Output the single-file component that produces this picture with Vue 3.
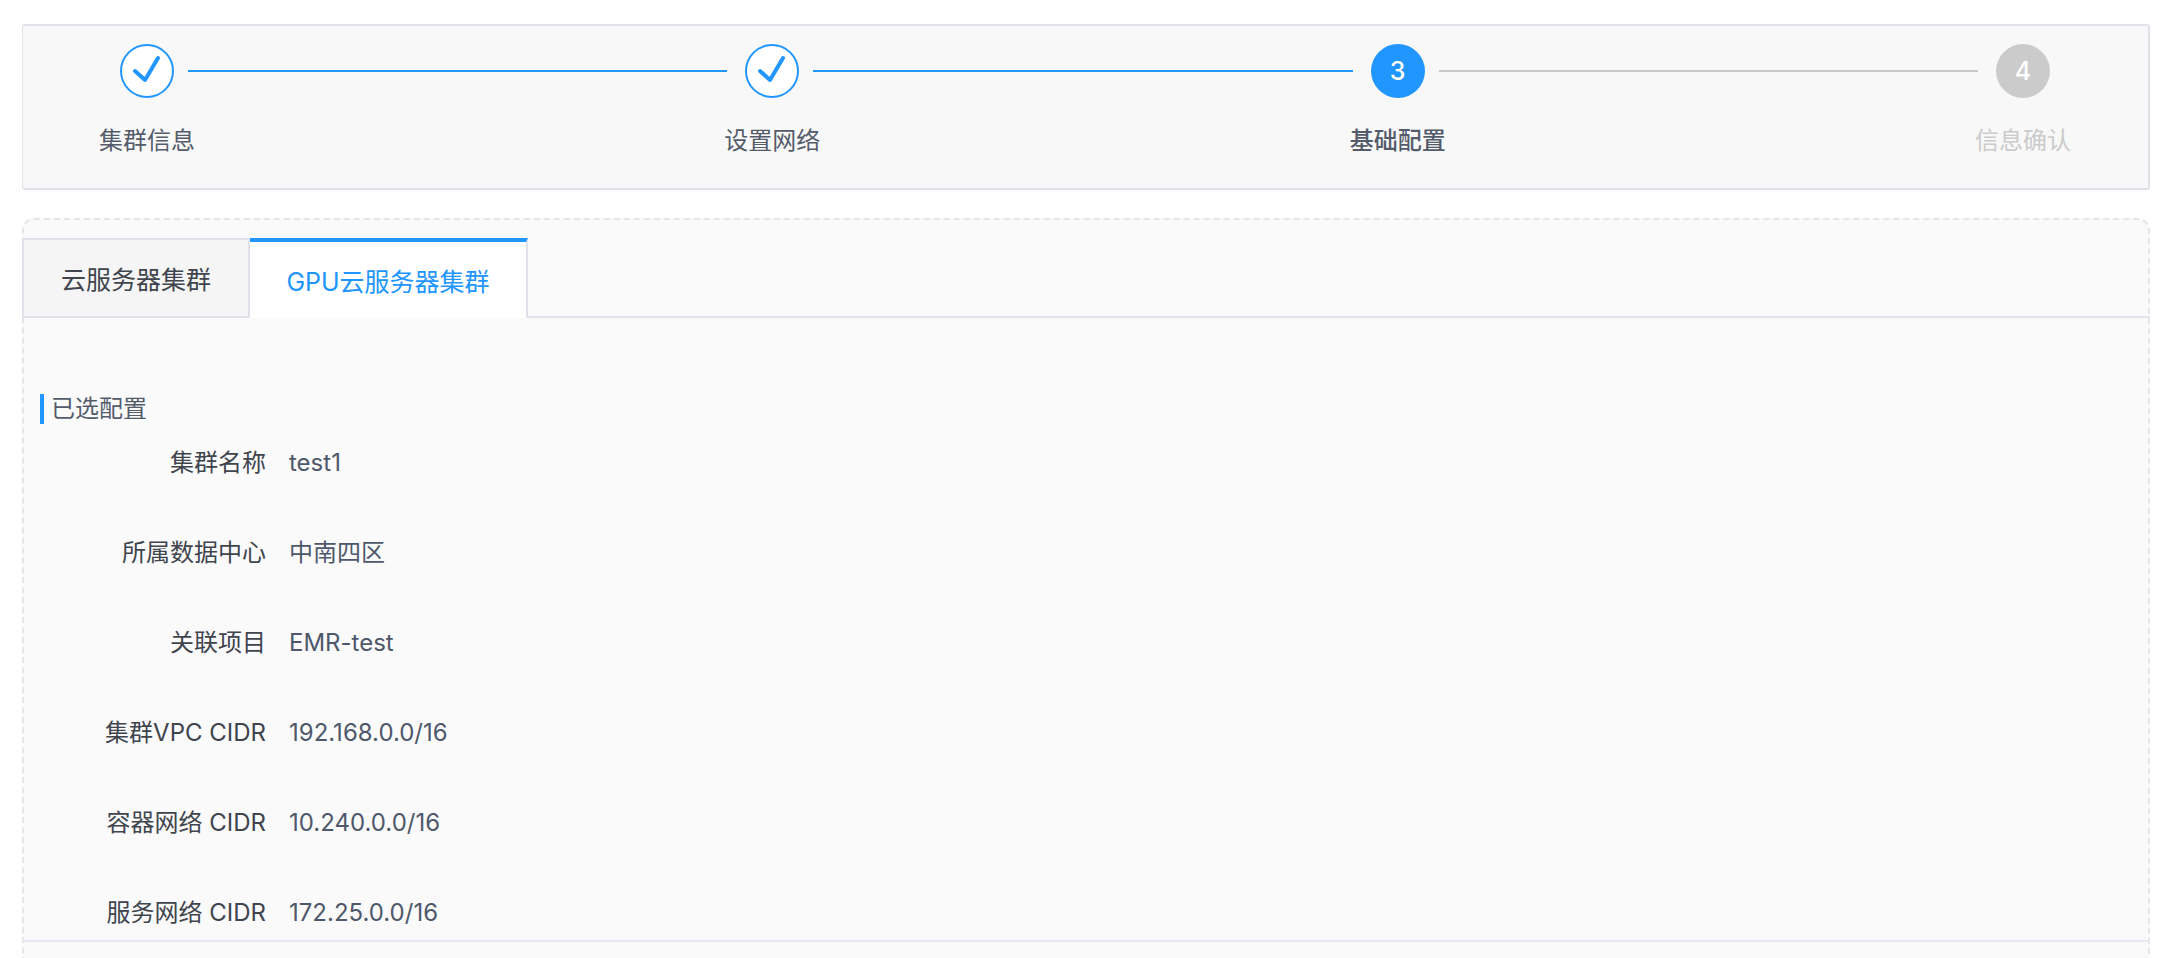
<script setup>
const steps = [
  { name: '集群信息', state: 'done' },
  { name: '设置网络', state: 'done' },
  { name: '基础配置', state: 'active', num: 3 },
  { name: '信息确认', state: 'todo', num: 4 }
]

const rows = [
  { label: '集群名称', value: 'test1' },
  { label: '所属数据中心', value: '中南四区' },
  { label: '关联项目', value: 'EMR-test' },
  { label: '集群VPC CIDR', value: '192.168.0.0/16' },
  { label: '容器网络 CIDR', value: '10.240.0.0/16' },
  { label: '服务网络 CIDR', value: '172.25.0.0/16' }
]
</script>

<template>
  <div class="page">
    <div class="steps">
      <template v-for="(step, index) in steps" :key="step.name">
        <div class="circle" :class="step.state">
          <svg v-if="step.state === 'done'" width="54" height="54" viewBox="0 0 54 54">
            <circle cx="27" cy="27" r="26" fill="#fff" stroke="#2196ff" stroke-width="2" />
            <path d="M15 27l10 9 13-22" fill="none" stroke="#2196ff" stroke-width="4" stroke-linecap="round" stroke-linejoin="round" />
          </svg>
          <span v-else>{{ step.num }}</span>
        </div>
        <div v-if="index < steps.length - 1" class="line" :class="{ passed: step.state === 'done' }"></div>
      </template>
      <template v-for="(step, index) in steps" :key="step.name + '-label'">
        <div class="step-name" :class="step.state" :style="{ gridColumn: index * 2 + 1 }">{{ step.name }}</div>
      </template>
    </div>

    <div class="panel">
      <div class="tabs">
        <div class="tab">云服务器集群</div>
        <div class="tab selected">GPU云服务器集群</div>
      </div>
      <div class="content">
        <div class="section-title">已选配置</div>
        <div v-for="row in rows" :key="row.label" class="row">
          <div class="row-label">{{ row.label }}</div>
          <div class="row-value">{{ row.value }}</div>
        </div>
      </div>
    </div>
  </div>
</template>

<style scoped>
.page {
  height: 958px;
  overflow: hidden;
  box-sizing: border-box;
  padding: 24px 10px 0 22px;
  background: #fff;
  font-family: Inter, "Noto Sans CJK SC", sans-serif;
  font-size: 24px;
}

.steps {
  display: grid;
  grid-template-columns: 54px 1fr 54px 1fr 54px 1fr 54px;
  grid-template-rows: 54px auto;
  align-items: center;
  box-sizing: border-box;
  height: 166px;
  padding: 18px 98px 0 97px;
  background: #f8f8f8;
  border: 2px solid #dfe3e9;
  border-left-width: 1px;
  border-radius: 3px;
  align-content: start;
}

.circle {
  width: 54px;
  height: 54px;
  border-radius: 50%;
  display: flex;
  align-items: center;
  justify-content: center;
  color: #fff;
  font-size: 25px;
  font-weight: 500;
}

.circle svg {
  display: block;
}

.circle.active {
  background: #2196ff;
}

.circle.todo {
  background: #cbcbcb;
}

.line {
  height: 2px;
  margin: 0 18px 0 14px;
  background: #c8c8c8;
}

.line.passed {
  background: #2196ff;
}

.step-name {
  justify-self: center;
  grid-row: 2;
  margin-top: 26px;
  line-height: 34px;
  white-space: nowrap;
  color: #545c6b;
}

.step-name.active {
  font-weight: 500;
}

.step-name.todo {
  color: #cbcbcb;
}

.panel {
  box-sizing: border-box;
  height: 780px;
  margin-top: 28px;
  padding-top: 18px;
  background: #fafafb;
  border: 2px dashed #e6e6e6;
  border-radius: 12px;
}

.tabs {
  display: flex;
  height: 80px;
  box-sizing: border-box;
  margin: 0 -2px;
  border-bottom: 2px solid #dfe3ec;
  font-size: 25px;
}

.tab {
  box-sizing: border-box;
  width: 228px;
  height: 80px;
  flex-shrink: 0;
  display: flex;
  align-items: center;
  justify-content: center;
  background: #f5f5f5;
  border: 2px solid #dfe3e9;
  color: #40444d;
}

.tab.selected {
  width: 278px;
  background: #fff;
  border: 0;
  border-top: 4px solid #2196ff;
  border-right: 2px solid #dfe3e9;
  color: #2196ff;
}

.content {
  box-sizing: border-box;
  height: 624px;
  margin-right: -2px;
  margin-left: -2px;
  padding: 76px 0 0 18px;
  overflow: hidden;
  border-bottom: 2px solid #e4e9f4;
}

.section-title {
  height: 30px;
  line-height: 30px;
  padding-left: 7px;
  margin-bottom: 19px;
  border-left: 4px solid #2196ff;
  color: #545c6b;
}

.row {
  display: flex;
  height: 40px;
  line-height: 40px;
  margin-bottom: 50px;
  column-gap: 23px;
}

.row-label {
  width: 226px;
  text-align: right;
  color: #40444d;
}

.row-value {
  color: #4e586a;
}
</style>

<style>
html,
body {
  margin: 0;
  overflow: hidden;
}
</style>
